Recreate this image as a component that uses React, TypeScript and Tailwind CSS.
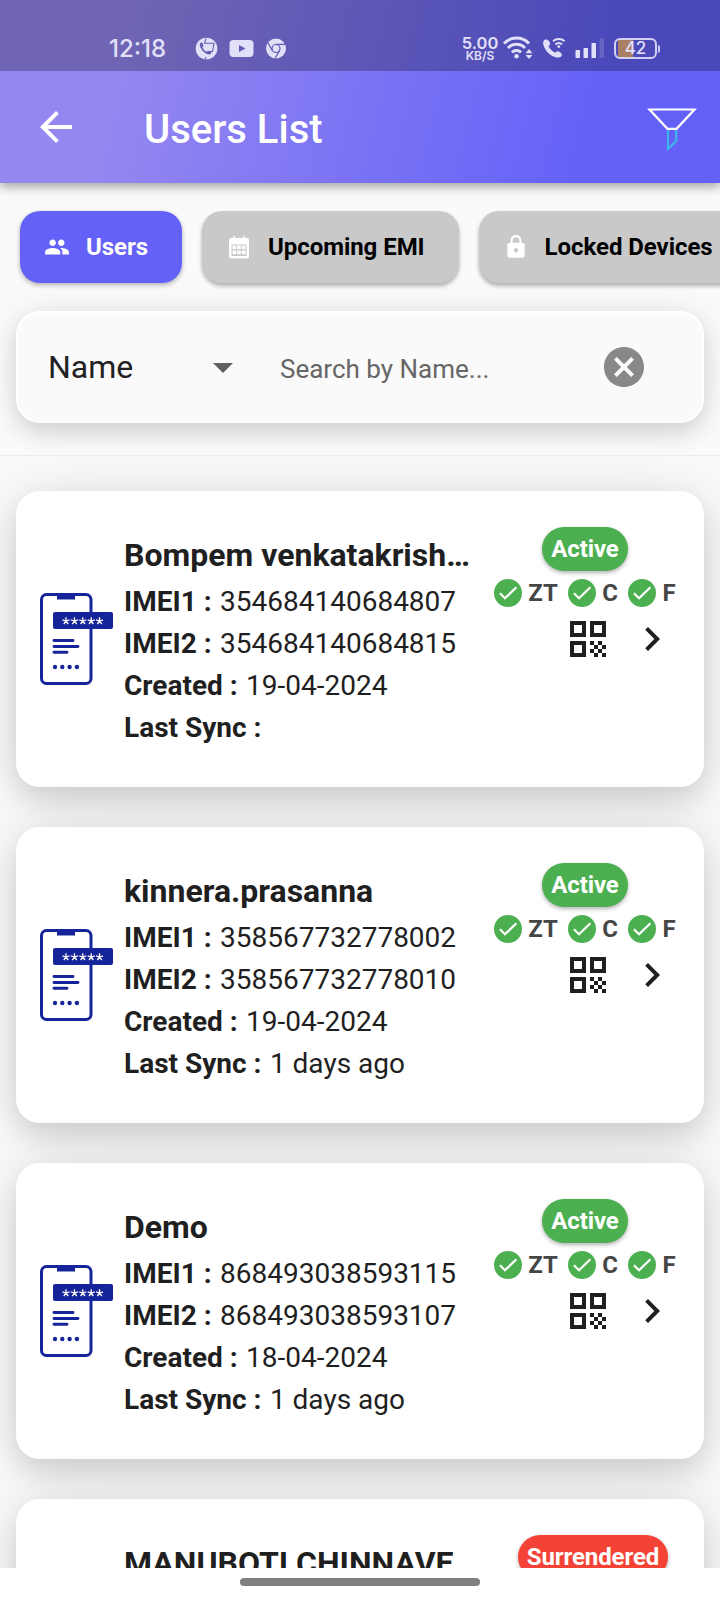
import type { ReactNode } from 'react'
import { MdArrowBack, MdArrowDropDown, MdCancel, MdChevronRight, MdLock, MdPeople, MdQrCode } from 'react-icons/md'

type User = {
  name: string
  imei1: string
  imei2: string
  created: string
  lastSync: string
  status: 'Active' | 'Surrendered'
}

const users: User[] = [
  { name: 'Bompem venkatakrishna', imei1: '354684140684807', imei2: '354684140684815', created: '19-04-2024', lastSync: '', status: 'Active' },
  { name: 'kinnera.prasanna', imei1: '358567732778002', imei2: '358567732778010', created: '19-04-2024', lastSync: '1 days ago', status: 'Active' },
  { name: 'Demo', imei1: '868493038593115', imei2: '868493038593107', created: '18-04-2024', lastSync: '1 days ago', status: 'Active' },
  { name: 'MANUBOTI CHINNAVE…', imei1: '', imei2: '', created: '', lastSync: '', status: 'Surrendered' },
]

function StatusBar() {
  return (
    <div className="flex h-[71px] items-start bg-black/25 pt-[36px] pl-[109px] text-[#e2e0f8]">
      <span className="w-[86px] font-['Inter'] text-[24px] leading-[25px] font-medium">12:18</span>
      {/* notification icons */}
      <svg width="92" height="24" viewBox="0 0 92 24" className="mt-px shrink-0">
        <circle cx="11.5" cy="11.5" r="10.8" fill="currentColor" />
        <path d="M11 1.5 9.5 6.2h9.5l-1.5 8.3h-3.5M11 20l-1 2.5" fill="none" stroke="#675eb4" strokeWidth="1.1" />
        <path d="M5 6.2c1-1 2-1 2.5 0l.9 2c.3.8-.8 1.4-.8 2 .6 2 2 3.6 4 4.5.7.1 1.2-1.2 2-.8l2 .9c1 .5 1 1.5 0 2.3C13 19.5 3 11.5 5 6.2z" fill="#675eb4" />
        <rect x="34.5" y="3" width="24" height="17" rx="4" fill="currentColor" />
        <path d="M44 8v7l6.5-3.5z" fill="#655db4" />
        <circle cx="81" cy="11.5" r="10" fill="currentColor" />
        <g fill="none" stroke="#635bb4" strokeWidth="1.2">
          <circle cx="81" cy="11.5" r="4" />
          <path d="M81 7.4h9.2M77.4 13.6 72.8 5.6M84.6 13.6 80 21.5" />
        </g>
      </svg>
      <div className="ml-[175px] flex w-[36px] flex-col items-center font-['Inter'] font-semibold">
        <span className="text-[16.5px] leading-[14px]">5.00</span>
        <span className="text-[12px] leading-[11px]">KB/S</span>
      </div>
      {/* wifi, call and signal strength */}
      <svg width="106" height="24" viewBox="0 0 106 24" className="ml-[3px] shrink-0">
        <g transform="translate(1 0)">
          <g fill="none" stroke="currentColor" strokeWidth="3">
            <path d="M2 7.5a17 17 0 0 1 25 0M6 12a11.5 11.5 0 0 1 17 0M10 16.3a6.5 6.5 0 0 1 9 0" />
          </g>
          <circle cx="14.5" cy="20.3" r="2.3" fill="currentColor" />
          <path d="M23.5 17.2l3.5-4.2 3.5 4.2zM23.5 19l3.5 4 3.5-4z" fill="currentColor" />
          <path d="M43 3.6c-2 .8-2.4 3.4-1.3 6.4 2 5 6 9.2 11 11 3 1 6 .8 7-1.2.8-1.6-1-3.3-3-4.3-1.7-.8-2.5 0-3.4 1.2-3-1.3-5.5-3.7-6.8-6.7 1.2-.8 2-1.6 1.4-3.3-.7-2-2.7-4-4.9-3.1z" fill="currentColor" />
          <path d="M51 5.2a8.8 8.8 0 0 1 11.6 0M53.5 8.5a5 5 0 0 1 6.6 0" fill="none" stroke="currentColor" strokeWidth="1.9" />
          <circle cx="56.8" cy="10.6" r="1.4" fill="currentColor" />
          <g fill="currentColor">
            <rect x="73.5" y="14" width="4.5" height="8" rx="0.8" />
            <rect x="81.5" y="12" width="4.5" height="10" rx="0.8" />
            <rect x="89.5" y="7" width="4.5" height="15" rx="0.8" />
            <rect x="97.5" y="2" width="4.5" height="20" rx="0.8" opacity="0.18" />
          </g>
        </g>
      </svg>
      <div className="mt-[2px] ml-[7px] flex items-center gap-px">
        <div className="flex h-[21px] w-[43px] items-center justify-center rounded-[6px] border-2 border-[#d3d0f5] bg-[linear-gradient(90deg,#4d4bb8_2px,#a87f62_2px,#a87f62_17px,#4d4bb8_17px)] font-['Inter'] text-[17px] leading-none font-medium">
          42
        </div>
        <div className="h-[8px] w-[2px] rounded-r bg-[#c9c6f0]" />
      </div>
    </div>
  )
}

function AppBar() {
  return (
    <div className="flex h-[112px] items-center pr-[23px] pl-[32px] text-white">
      <MdArrowBack className="size-[48px]" />
      <h1 className="ml-[64px] flex-1 pt-[6px] text-[40px] leading-none font-medium">Users List</h1>
      <svg width="50" height="46" viewBox="0 0 50 46" fill="none" strokeWidth="2.2" className="mt-[6px]">
        <path d="M21 22v20l8.2-8V22" stroke="#3fb4e8" />
        <path d="M2.5 2.5h45L29.5 21.8h-9z" stroke="#fff" />
      </svg>
    </div>
  )
}

function CalendarIcon() {
  return (
    <svg viewBox="0 0 26 26" className="size-[26px] shrink-0">
      <path
        fill="#fff"
        fillRule="evenodd"
        d="M5 4h2V2.5h2.2V4h7.6V2.5H19V4h2a2 2 0 0 1 2 2v16.5a2 2 0 0 1-2 2H5a2 2 0 0 1-2-2V6a2 2 0 0 1 2-2zM5.5 10.5v11.5h15V10.5z"
      />
      <path fill="#fff" d="M6.5 11.5h3.7v3.7H6.5zM11.1 11.5h3.8v3.7h-3.8zM15.8 11.5h3.7v3.7h-3.7zM6.5 16.5h3.7v3.7H6.5zM11.1 16.5h3.8v3.7h-3.8zM15.8 16.5h3.7v3.7h-3.7z" />
    </svg>
  )
}

function Tab({ icon, label, active }: { icon: ReactNode; label: string; active?: boolean }) {
  return (
    <div
      className={`flex h-[72px] shrink-0 items-center gap-4 rounded-[20px] pr-[34px] pl-6 text-[24px] font-bold tracking-[-0.05px] whitespace-nowrap ${
        active ? 'bg-[#6461f8] text-white shadow-[0_2px_5px_rgba(0,0,0,0.3)]' : 'bg-[#c9c9c9] text-black shadow-[0_3px_4px_rgba(0,0,0,0.3)]'
      }`}
    >
      {icon}
      <span>{label}</span>
    </div>
  )
}

function PhoneIcon() {
  return (
    <svg width="74" height="92" viewBox="0 0 74 92" className="shrink-0" fill="none" stroke="#16249a">
      <rect x="1.5" y="1.5" width="49.5" height="89" rx="5" strokeWidth="3" />
      <path d="M17 1h18v5.5H17z" fill="#16249a" stroke="none" />
      <rect x="13" y="19" width="60" height="17" rx="2" fill="#16249a" stroke="none" />
      {[26, 34.5, 42.8, 51.2, 59.5].map((x) => (
        <path
          key={x}
          transform={`translate(${x} 28)`}
          d="M0 0V-3.8M0 0L3.5-1.1M0 0L2.2 3M0 0L-2.2 3M0 0L-3.5-1.1"
          stroke="#fff"
          strokeWidth="1.3"
        />
      ))}
      <path d="M14 47.5h19M14 53.5h24M14 59.3h13" strokeWidth="2.9" strokeLinecap="round" />
      {[15, 22.3, 29.6, 36.9].map((x) => (
        <circle key={x} cx={x} cy="74" r="2.2" fill="#16249a" stroke="none" />
      ))}
    </svg>
  )
}

function Check({ label }: { label: string }) {
  return (
    <div className="flex items-center gap-[6px]">
      <svg width="28" height="28" viewBox="0 0 28 28">
        <circle cx="14" cy="14" r="14" fill="#4caf50" />
        <path d="M6 14.3l5 5L22.4 8.2" fill="none" stroke="#fff" strokeWidth="2.2" />
      </svg>
      <span>{label}</span>
    </div>
  )
}

function Row({ label, value }: { label: string; value: string }) {
  return (
    <p className="text-[28px] leading-[42px] whitespace-nowrap">
      <b className="mr-[1.5px] font-bold">{label} : </b>
      {value}
    </p>
  )
}

function UserCard({ user }: { user: User }) {
  const active = user.status === 'Active'
  return (
    <div className="flex h-[296px] shrink-0 rounded-[24px] bg-white pl-6 text-[#1f1f1f] shadow-[0_12px_24px_rgba(0,0,0,0.09),0_8px_56px_rgba(0,0,0,0.14)]">
      <div className="flex w-[84px] items-center">{active && <PhoneIcon />}</div>
      <div className="w-[356px] pt-[40px]">
        <h2 className="mb-px truncate text-[32px] leading-[49px] font-bold">{user.name}</h2>
        <Row label="IMEI1" value={user.imei1} />
        <Row label="IMEI2" value={user.imei2} />
        <Row label="Created" value={user.created} />
        <Row label="Last Sync" value={user.lastSync} />
      </div>
      <div className="ml-[14px] flex w-[182px] flex-col items-center pt-[36px]">
        <span
          className={`flex h-[44px] shrink-0 items-center rounded-full px-[9px] text-[24px] font-bold tracking-[-0.1px] text-white shadow-[0_2px_4px_rgba(0,0,0,0.3)] ${
            active ? 'bg-[#4caf50]' : 'ml-4 bg-[#f44336]'
          }`}
        >
          {user.status}
        </span>
        <div className="flex h-[44px] items-center gap-[10.5px] text-[24px] font-bold text-[#464646]">
          <Check label="ZT" />
          <Check label="C" />
          <Check label="F" />
        </div>
        <div className="flex gap-[16px] self-start pl-[70px]">
          <MdQrCode className="size-[48px]" />
          <MdChevronRight className="size-[48px]" />
        </div>
      </div>
    </div>
  )
}

export default function App() {
  return (
    <div className="flex h-[1600px] w-[720px] flex-col overflow-hidden bg-[#fafafa] font-['Roboto',sans-serif]">
      <header className="z-10 shrink-0 bg-[linear-gradient(104deg,#9487f0_18%,#6461f8_82%)] shadow-[0_4px_10px_rgba(0,0,0,0.35)]">
        <StatusBar />
        <AppBar />
      </header>

      <div className="flex shrink-0 gap-5 pt-7 pl-5">
        <Tab icon={<MdPeople className="size-[26px]" />} label="Users" active />
        <Tab icon={<CalendarIcon />} label="Upcoming EMI" />
        <Tab icon={<MdLock className="size-[26px] text-white" />} label="Locked Devices" />
      </div>

      <div className="mx-4 mt-7 flex h-[112px] shrink-0 items-center rounded-[24px] border-2 border-white bg-[#fafafa] pl-[30px] shadow-[0_12px_22px_rgba(0,0,0,0.08),0_4px_30px_rgba(0,0,0,0.12)]">
        <span className="w-[151px] text-[32px] text-[#212121]">Name</span>
        <MdArrowDropDown className="size-[48px] text-[#616161]" />
        <span className="ml-[33px] w-[320px] pt-[4px] text-[26px] text-[#666]">Search by Name...</span>
        <MdCancel className="size-[48px] text-[#888]" />
      </div>

      <div className="mt-8 flex min-h-0 flex-1 flex-col gap-10 overflow-hidden border-t border-[#ebebeb] px-4 pt-[35px]">
        {users.map((user) => (
          <UserCard key={user.name} user={user} />
        ))}
      </div>

      <div className="flex h-8 shrink-0 justify-center bg-white pt-[10px]">
        <div className="h-2 w-[240px] rounded-full bg-[#808080]" />
      </div>
    </div>
  )
}
